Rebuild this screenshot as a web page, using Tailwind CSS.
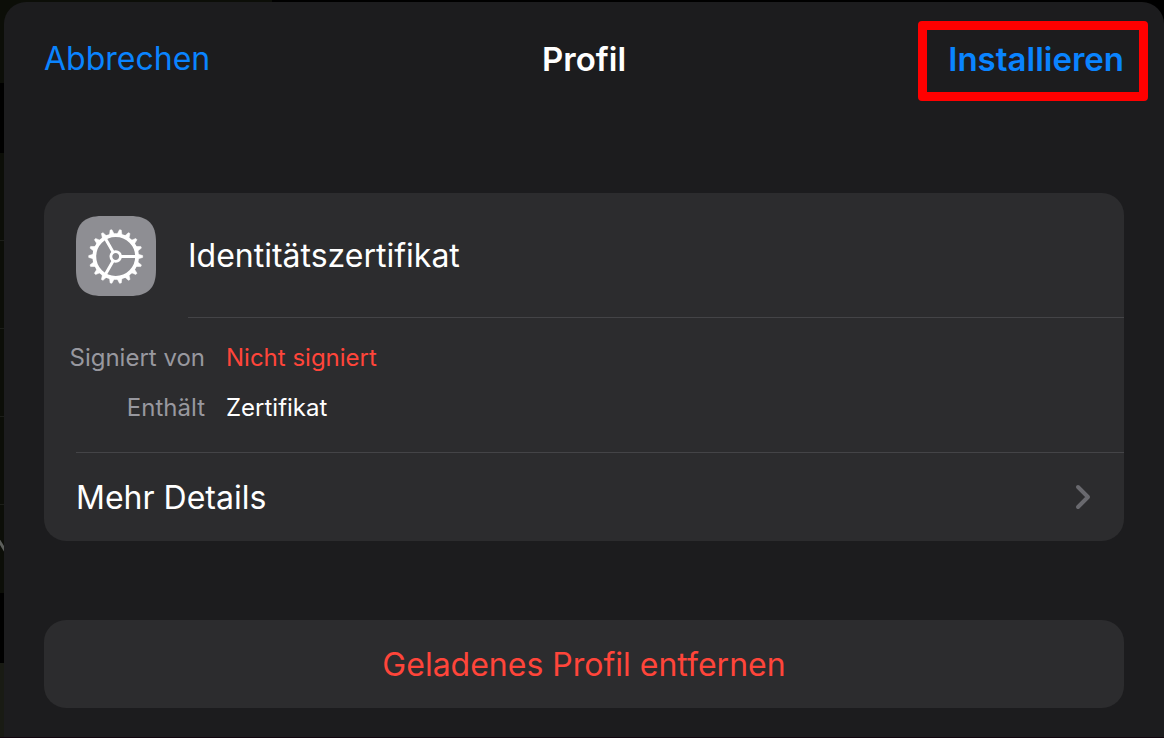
<!DOCTYPE html>
<html lang="de">
<head>
  <meta charset="UTF-8" />
  <meta name="viewport" content="width=device-width, initial-scale=1.0" />
  <title>Profil</title>
  <script src="https://cdn.jsdelivr.net/npm/@tailwindcss/browser@4"></script>
</head>
<body class="relative flex min-h-screen flex-col border-b border-[#12060f] bg-black pl-1 pt-0.5 font-[Inter,Roboto,sans-serif] text-white">

  <!-- Dimmed settings list behind the sheet -->
  <div class="absolute inset-0 flex flex-col overflow-hidden" aria-hidden="true">
    <div class="h-[83px] w-[272px] bg-[#0c0e08]"></div>
    <div class="h-[70px]"></div>
    <div class="h-[440px] w-8 divide-y divide-[#1c1e19] bg-[#0c0e08]">
      <div class="h-[88px]"></div>
      <div class="h-[88px]"></div>
      <div class="h-[88px]"></div>
      <div class="h-[88px]"></div>
      <div class="h-[88px] pt-[34px]">
        <svg class="h-4 w-2" viewBox="0 0 8 16" fill="none" stroke="#5c5e5b" stroke-width="3"><path d="M-2 0 6 13" /></svg>
      </div>
    </div>
    <div class="h-[70px]"></div>
    <div class="w-8 grow bg-[#191b14]"></div>
  </div>

  <main class="relative flex grow flex-col rounded-t-[22px] bg-[#1c1c1e] px-10">
    <header class="grid h-[113px] grid-cols-3 items-center leading-10">
      <button type="button" class="justify-self-start text-[32px] text-[#0a84ff]">Abbrechen</button>
      <h1 class="justify-self-center text-[33px] font-semibold">Profil</h1>
      <div class="relative flex justify-self-end">
        <button type="button" class="text-[33px] font-semibold text-[#0a84ff]">Installieren</button>
        <div class="pointer-events-none absolute -top-[18px] -right-6 -bottom-[22px] -left-[30px] rounded-[4px] border-[9px] border-[#ff0000]"></div>
      </div>
    </header>

    <section class="mt-[78px] overflow-hidden rounded-[22px] bg-[#2c2c2e]">
      <div class="flex items-center gap-8 pl-8">
        <svg class="size-20 shrink-0" viewBox="0 0 80 80" fill="none" aria-hidden="true">
          <path d="M26 0H54C72 0 80 8 80 26V54C80 72 72 80 54 80H26C8 80 0 72 0 54V26C0 8 8 0 26 0Z" fill="#8e8e93" />
          <g id="gear" transform="translate(39.7 40.5)" stroke="#fff">
            <circle r="21.4" stroke-width="3.8" />
            <circle r="4.8" stroke-width="2.8" />
            <path d="M5 0H21M-2.5 4.3-10.5 18.2M-2.5-4.3-10.5-18.2" stroke-width="3" />
          </g>
        </svg>
        <h2 class="flex h-[125px] grow items-center border-b border-[#444447] pt-0.5 text-[32px] leading-10">Identitätszertifikat</h2>
      </div>

      <dl class="grid grid-cols-[161px_1fr] gap-x-[21px] gap-y-5 pt-[25px] pb-[29px] text-2xl leading-[30px]">
        <dt class="text-right text-[#98989f]">Signiert von</dt>
        <dd class="text-[#ff453a]">Nicht signiert</dd>
        <dt class="text-right text-[#98989f]">Enthält</dt>
        <dd>Zertifikat</dd>
      </dl>

      <a href="#details" class="ml-8 flex h-[89px] items-center justify-between border-t border-[#444447] pr-8 text-[32px] leading-10">
        <span class="pt-0.5">Mehr Details</span>
        <svg class="h-7 w-[18px]" viewBox="0 0 18 28" fill="none" stroke="#69696e" stroke-width="4" stroke-linecap="round" stroke-linejoin="round" aria-hidden="true"><path d="M4 4 14 14 4 24" /></svg>
      </a>
    </section>

    <button type="button" class="mt-[79px] mb-[29px] h-[88px] rounded-[22px] bg-[#2c2c2e] pt-0.5 text-[32px] leading-10 text-[#ff453a]">Geladenes Profil entfernen</button>
  </main>

  <script>
    // 18 teeth around the gear, one every 20 degrees
    const gear = document.getElementById('gear');
    for (let i = 0; i < 18; i++) {
      const tooth = document.createElementNS('http://www.w3.org/2000/svg', 'path');
      tooth.setAttribute('d', 'M22.6-2.3 27-.9V.9L22.6 2.3Z');
      tooth.setAttribute('fill', '#fff');
      tooth.setAttribute('stroke-width', '0.5');
      tooth.setAttribute('transform', `rotate(${i * 20})`);
      gear.appendChild(tooth);
    }
  </script>
</body>
</html>
